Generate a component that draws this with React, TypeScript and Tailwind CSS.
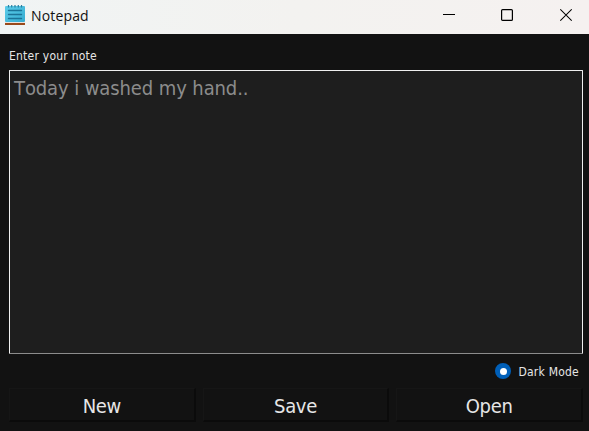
import React from "react";

function NotepadIcon() {
  return (
    <svg width="20" height="21" viewBox="0 0 20 21" className="shrink-0" aria-hidden="true">
      <defs>
        <linearGradient id="page" x1="0" y1="0" x2="1" y2="1">
          <stop offset="0" stopColor="#5ccdea" />
          <stop offset="1" stopColor="#35abd0" />
        </linearGradient>
      </defs>
      <rect x="0" y="17" width="20" height="3" rx="0.6" fill="#99491a" />
      <rect x="0" y="16.8" width="20" height="1.2" fill="#e9e3df" />
      <rect x="0" y="1" width="20" height="16" rx="1" fill="url(#page)" />
      <path d="M3.5 0v2.4M6.7 0v2.4M10 0v2.4M13.3 0v2.4M16.5 0v2.4" stroke="#2a7f9f" strokeWidth="1.2" />
      <path d="M3.5 5.5h13M3.5 9.5h13M3.5 13.5h13" stroke="#1b7398" strokeWidth="1.4" strokeLinecap="round" />
    </svg>
  );
}

function TitleBar() {
  return (
    <header className="flex h-[34px] items-start bg-linear-to-r from-[#f0f4f4] via-[#f3f2f0] to-[#f5f1f0] pt-[5px] pl-[5px] font-['Open_Sans',sans-serif] text-[#111111]">
      <NotepadIcon />
      <h1 className="ml-[6px] text-[14px] leading-[21px] font-normal tracking-[0.15px]">Notepad</h1>
      <div className="ml-auto flex pr-[17px]">
        <button aria-label="Minimize" className="mr-[46px]">
          <svg width="12" height="20" viewBox="0 0 12 20">
            <path d="M0 9.5h12" stroke="#000" />
          </svg>
        </button>
        <button aria-label="Maximize" className="mr-[47px]">
          <svg width="12" height="20" viewBox="0 0 12 20" fill="none">
            <rect x="0.6" y="4.6" width="10.8" height="10.8" rx="1" stroke="#000" strokeWidth="1.2" />
          </svg>
        </button>
        <button aria-label="Close">
          <svg width="12" height="20" viewBox="0 0 12 20">
            <path d="M0.3 4.3l11.4 11.4M11.7 4.3L0.3 15.7" stroke="#000" strokeWidth="1.1" />
          </svg>
        </button>
      </div>
    </header>
  );
}

function ActionButton({ label }: { label: string }) {
  return (
    <button className="h-[34px] flex-1 border-t border-r-2 border-b-2 border-l border-t-[#161616] border-r-[#0b0b0b] border-b-[#0b0b0b] border-l-[#161616] bg-[#121212] pt-[3px] text-[20px] leading-[28px] tracking-[-0.3px]">
      {label}
    </button>
  );
}

export default function App() {
  return (
    <div className="flex h-[431px] w-[589px] flex-col overflow-hidden bg-[#121212] font-['DejaVu_Sans_Condensed','Noto_Sans',sans-serif] text-[#e6e6e6]">
      <TitleBar />
      <main className="flex flex-1 flex-col pt-[14px] pr-[6px] pl-[9px]">
        <label htmlFor="note" className="text-[12px] leading-[16px] tracking-[0.23px]">
          Enter your note
        </label>
        <textarea
          id="note"
          placeholder="Today i washed my hand.."
          className="mt-[6px] block h-[284px] w-full resize-none rounded-[1px] border border-t-[#f0f0f0] border-r-[#f0f0f0] border-b-[#8c8c8c] border-l-[#f0f0f0] bg-[#1e1e1e] px-[4px] py-[4px] text-[20px] leading-[27px] tracking-[-0.1px] outline-none [font-kerning:none] placeholder:text-[#8c8c8c]"
        />
        <div className="mt-[8px] flex h-[18px] items-center justify-end pr-[4px] text-[12px] leading-[18px] tracking-[0.23px]">
          <span className="mr-[7px] flex size-[16px] items-center justify-center rounded-full bg-[#005fb8]">
            <span className="size-[7px] rounded-full bg-white" />
          </span>
          <span className="pt-[1px]">Dark Mode</span>
        </div>
        <div className="mt-[8px] flex gap-[7px]">
          <ActionButton label="New" />
          <ActionButton label="Save" />
          <ActionButton label="Open" />
        </div>
      </main>
    </div>
  );
}
